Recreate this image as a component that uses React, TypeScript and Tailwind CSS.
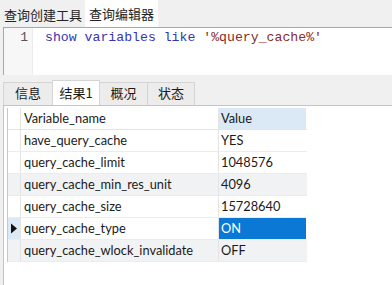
import React from "react";

const rows: { name: string; value: string; alt?: boolean; selected?: boolean }[] = [
  { name: "have_query_cache", value: "YES" },
  { name: "query_cache_limit", value: "1048576" },
  { name: "query_cache_min_res_unit", value: "4096", alt: true },
  { name: "query_cache_size", value: "15728640" },
  { name: "query_cache_type", value: "ON", selected: true },
  { name: "query_cache_wlock_invalidate", value: "OFF", alt: true },
];

const cjk = "font-['Noto_Sans_CJK_SC',sans-serif]";

export default function App() {
  return (
    <div className="w-[392px] h-[285px] bg-[#f0f0f0] overflow-hidden text-[#1a1a1a]">
      {/* editor tabs */}
      <div className={`flex items-end h-[27px] ${cjk} text-[13px]`}>
        <div className="h-[24px] pl-[4px] pr-[3px] flex items-center text-[#222]">查询创建工具</div>
        <div className="h-[27px] w-[73px] bg-white flex items-center justify-center text-[#222]">查询编辑器</div>
      </div>

      {/* sql editor */}
      <div className="h-[48px] ml-[3px] flex bg-white border-t border-l border-[#a8a8a8]">
        <div className="w-[29px] bg-[#f7f7f7] border-r border-[#ececec] text-right pr-[4px] font-['Liberation_Mono',monospace] text-[13px] text-[#555]">
          1
        </div>
        <div className="pl-[12px] font-['Liberation_Mono',monospace] text-[13.2px] whitespace-pre">
          <span className="text-[#3535b0]">show variables like </span>
          <span className="text-[#8a2a2a]">'%query_cache%'</span>
        </div>
      </div>

      {/* result tabs */}
      <div className={`mt-[5px] ml-[3px] flex items-end h-[25px] ${cjk} text-[13px]`}>
        <div className="w-[49px] h-[23px] pb-[3px] bg-[#ececec] border-t border-l border-[#d4d4d4] flex items-center justify-center">信息</div>
        <div className="w-[48px] h-[25px] pb-[1px] bg-white border-t border-l border-r border-[#d4d4d4] flex items-center justify-center">结果1</div>
        <div className="w-[48px] h-[23px] pb-[3px] bg-[#ececec] border-t border-r border-[#d4d4d4] flex items-center justify-center">概况</div>
        <div className="w-[47px] h-[23px] pb-[3px] bg-[#ececec] border-t border-r border-[#d4d4d4] flex items-center justify-center">状态</div>
      </div>

      {/* result grid */}
      <div className="ml-[3px] h-[182px] bg-white border-t border-l border-[#c4c4c4] pl-[3px] pt-[2px] font-['Lato','Noto_Sans',sans-serif] text-[12.8px]">
        <div className="w-[300px] border-l border-[#c8c8c8]">
          <div className="flex h-[22px] border-b border-[#e4e4e4]">
            <div className="w-[13px] border-r border-[#e4e4e4]" />
            <div className="w-[198px] pl-[3px] flex items-center border-r border-[#e4e4e4]">Variable_name</div>
            <div className="w-[87px] pl-[2px] flex items-center bg-[#dbe8f5]">Value</div>
          </div>
          {rows.map((r) => (
            <div key={r.name} className={`flex h-[22px] border-b border-[#ececec] ${r.alt ? "bg-[#f1f2f4]" : "bg-white"}`}>
              <div className={`w-[13px] border-r border-[#e4e4e4] flex items-center ${r.selected ? "bg-[#dbe8f5]" : ""}`}>
                {r.selected && (
                  <svg width="8" height="11" viewBox="0 0 8 11" className="ml-[2px]">
                    <path d="M1 0.5 L7 5.5 L1 10.5 Z" fill="#111" />
                  </svg>
                )}
              </div>
              <div className="w-[198px] pl-[3px] flex items-center border-r border-[#e4e4e4]">{r.name}</div>
              <div className={`w-[87px] pl-[2px] flex items-center ${r.selected ? "bg-[#0a78d4] text-white" : ""}`}>{r.value}</div>
            </div>
          ))}
        </div>
      </div>
    </div>
  );
}
